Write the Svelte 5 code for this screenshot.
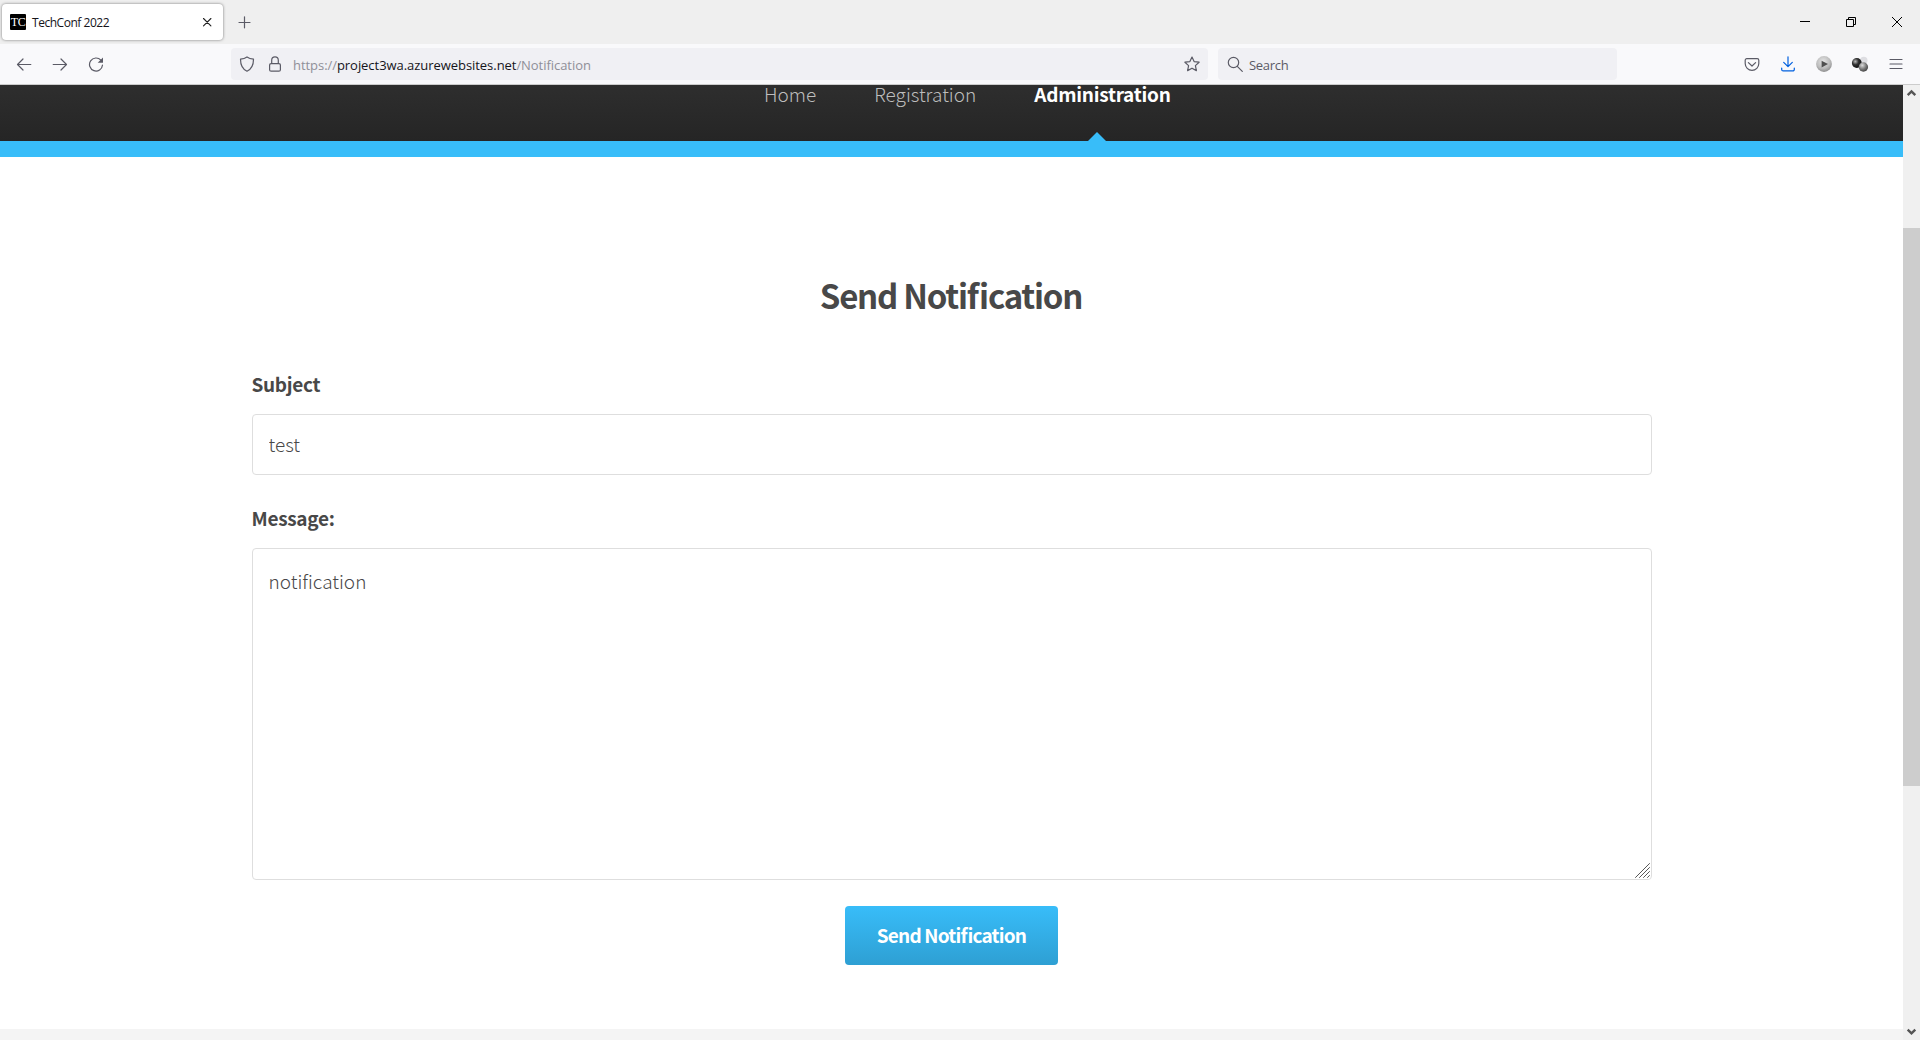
<script>
  let subject = $state('test');
  let message = $state('notification');
</script>

<div class="window">
  <div class="tabstrip">
    <div class="tab">
      <span class="favicon">TC</span>
      <span class="tab-title">TechConf 2022</span>
      <svg class="tab-close" width="16" height="16" viewBox="0 0 16 16"><path d="M4.500 4.500l7.400 7.400M11.900 4.500L4.500 11.900" /></svg>
    </div>
    <svg class="new-tab" width="16" height="16" viewBox="0 0 16 16"><path d="M8.500 2.800v11M3 8.500h11" /></svg>
    <div class="controls">
      <svg width="16" height="16" viewBox="0 0 16 16"><path d="M3 7.500h10" /></svg>
      <svg width="16" height="16" viewBox="0 0 16 16"><path d="M3.500 5.500h7v7h-7zM5.500 5.500v-2h7v7h-2" /></svg>
      <svg width="16" height="16" viewBox="0 0 16 16"><path d="M3 3l10 10M13 3L3 13" /></svg>
    </div>
  </div>

  <div class="toolbar">
    <div class="nav-buttons">
      <svg width="16" height="16" viewBox="0 0 16 16"><path d="M1.500 8.500h13.300M7 3L1.500 8.500 7 14" /></svg>
      <svg width="16" height="16" viewBox="0 0 16 16"><path d="M1.200 8.500h13.300M9 3l5.500 5.500L9 14" /></svg>
      <svg width="16" height="16" viewBox="0 0 16 16"><path d="M12.900 4.200A6.500 6.500 0 1 0 14.500 9" /><path class="solid" d="M15 1.500v5.300H9.700z" /></svg>
    </div>
    <div class="urlbar">
      <svg width="16" height="16" viewBox="0 0 16 16"><path d="M8 .9C6.300 2.100 3.900 2.900 1.500 3.200c0 5.400 1.600 9.700 6.500 12 4.900-2.300 6.500-6.600 6.500-12C12.100 2.900 9.700 2.100 8 .9z" /></svg>
      <svg class="lock" width="16" height="16" viewBox="0 0 16 16"><rect x="2.600" y="7.600" width="10.800" height="7.600" rx="1.500" /><path d="M4.700 7.500V4.200a3.300 3.300 0 0 1 6.600 0v3.300" /></svg>
      <span class="url"><span>https://</span><b>project3wa.azurewebsites.net</b><span>/Notification</span></span>
      <svg class="star" width="16" height="16" viewBox="0 0 16 16"><path d="M8 1.100l2.100 4.500 5 .6-3.700 3.400 1 5L8 12.200l-4.400 2.400 1-5L.9 6.200l5-.6z" /></svg>
    </div>
    <div class="searchbar">
      <svg width="16" height="16" viewBox="0 0 16 16"><circle cx="6.500" cy="6.500" r="5.200" /><path d="M10.300 10.300l5 5" /></svg>
      <span>Search</span>
    </div>
    <div class="actions">
      <svg width="16" height="16" viewBox="0 0 16 16"><path d="M2.800 2.700h10.400a1.600 1.600 0 0 1 1.600 1.600v3.200a6.800 6.800 0 0 1-13.600 0V4.300a1.600 1.600 0 0 1 1.600-1.600zM4.400 6.600L8 10l3.600-3.400" /></svg>
      <svg class="download" width="16" height="16" viewBox="0 0 16 16"><path d="M8 .8v9.500M3.700 6.300L8 10.600l4.300-4.300M1.700 12v1.400a1.500 1.500 0 0 0 1.500 1.500h9.600a1.500 1.500 0 0 0 1.500-1.500V12" /></svg>
      <svg class="addon" width="16" height="16" viewBox="0 0 16 16">
        <defs>
          <radialGradient id="disc" cx="45%" cy="35%" r="65%"><stop offset="0" stop-color="#e6e6e6" /><stop offset=".65" stop-color="#bdbdbd" /><stop offset="1" stop-color="#8f8f8f" /></radialGradient>
        </defs>
        <circle cx="8" cy="8" r="7.900" fill="url(#disc)" /><path d="M5.600 4.700L12 8l-6.400 3.400z" fill="#505050" />
      </svg>
      <svg class="addon" width="18" height="16" viewBox="0 0 18 16">
        <defs>
          <radialGradient id="dark" cx="35%" cy="35%" r="65%"><stop offset="0" stop-color="#bbb" /><stop offset=".5" stop-color="#333" /><stop offset="1" stop-color="#111" /></radialGradient>
          <radialGradient id="mid" cx="38%" cy="32%" r="70%"><stop offset="0" stop-color="#ddd" /><stop offset=".6" stop-color="#777" /><stop offset="1" stop-color="#444" /></radialGradient>
        </defs>
        <circle cx="12.800" cy="4.500" r="3.700" fill="#dedee2" /><circle cx="5.800" cy="7" r="4.900" fill="url(#dark)" /><circle cx="12.400" cy="11" r="4.700" fill="url(#mid)" />
      </svg>
      <svg width="16" height="16" viewBox="0 0 16 16"><path d="M2 3.500h12M2 8h12M2 12.500h12" /></svg>
    </div>
  </div>

  <div class="viewport">
    <div class="page">
      <nav>
        <a href="#home">Home</a>
        <a href="#registration">Registration</a>
        <a class="active" href="#administration">Administration</a>
      </nav>
      <main>
        <h2>Send Notification</h2>
        <label for="subject">Subject</label>
        <input id="subject" type="text" bind:value={subject} />
        <label for="message">Message:</label>
        <div class="area">
          <textarea id="message" bind:value={message}></textarea>
          <svg class="grip" width="15" height="15" viewBox="0 0 15 15"><path d="M.5 14.500l14-14M4.500 14.500l10-10M8.500 14.500l6-6M12.500 14.500l2-2" /></svg>
        </div>
        <button>Send Notification</button>
      </main>
    </div>
    <div class="scrollbar">
      <svg width="17" height="17" viewBox="0 0 17 17"><path d="M4.700 10.200l3.800-3.800 3.800 3.800" /></svg>
      <div class="thumb"></div>
      <svg width="17" height="17" viewBox="0 0 17 17"><path d="M4.700 6.600l3.800 3.800 3.800-3.800" /></svg>
    </div>
  </div>
</div>

<style>
  :global(body) { margin: 0; overflow: hidden; }
  .window {
    width: 1920px; height: 1040px; display: flex; flex-direction: column;
    font: 12px/16px "Open Sans", sans-serif; color: #15141a; background: #fff;
  }
  svg { display: block; flex: none; fill: none; stroke: #5b5b66; stroke-width: 1.2; stroke-linecap: round; stroke-linejoin: round; }
  .solid { fill: #5b5b66; stroke: none; }

  .tabstrip { height: 44px; flex: none; display: flex; align-items: center; background: #efefef; box-sizing: border-box; }
  .tab {
    width: 221px; height: 36px; margin-left: 2px; padding: 0 8px; box-sizing: border-box;
    display: flex; align-items: center; background: #fff; border-radius: 4px; box-shadow: 0 0 3px rgba(0, 0, 0, .5);
  }
  .favicon {
    width: 16px; height: 16px; border-radius: 1px; background: #000; color: #fff; text-align: center;
    font: 12px/16px "Liberation Serif", serif; letter-spacing: -.5px;
  }
  .tab-title { margin-left: 6px; padding-top: 2px; flex: 1; letter-spacing: -.47px; white-space: nowrap; }
  .tab-close { stroke: #222; stroke-width: 1.1; }
  .new-tab { margin-left: 13px; }
  .controls { margin-left: auto; display: flex; gap: 30px; margin-right: 15px; }
  .controls svg { stroke: #000; stroke-width: 1; stroke-linecap: butt; stroke-linejoin: miter; }

  .toolbar { height: 41px; flex: none; display: flex; align-items: center; background: #f9f9fb; border-bottom: 1px solid #ccc; box-sizing: border-box; }
  .nav-buttons { display: flex; gap: 20px; margin-left: 16px; width: 215px; }
  .urlbar, .searchbar { height: 32px; display: flex; align-items: center; background: #f0f0f4; border-radius: 4px; box-sizing: border-box; }
  .urlbar { width: 977px; padding: 0 8px; }
  .lock { margin-left: 12px; }
  .url { margin-left: 10px; padding-top: 2px; flex: 1; display: flex; font-size: 13px; letter-spacing: -.05px; color: #8f8f98; }
  .url b { font-weight: 400; color: #15141a; }
  .searchbar { width: 399px; margin-left: 10px; padding-left: 9px; gap: 6px; font-size: 13px; letter-spacing: -.3px; color: #5b5b66; }
  .searchbar span { padding-top: 2px; }
  .actions { margin-left: auto; margin-right: 17px; display: flex; gap: 20px; }
  .actions .addon + svg, .actions .addon { margin-right: -1px; }
  .download { stroke: #0060df; }
  .addon { stroke: none; }

  .viewport { flex: 1; min-height: 0; display: flex; }
  .page { width: 1903px; background: #f4f4f4; color: #484848; font-family: "Noto Sans CJK JP", "Source Sans Pro", sans-serif; }
  nav {
    height: 72px; box-sizing: border-box; border-bottom: 16px solid #38bdf9; background: linear-gradient(#2e2e2e, #252525);
    display: flex; gap: 58px; padding-left: 764px; font-size: 19px; line-height: 18px;
  }
  nav a { color: #bdbdbd; font-weight: 300; text-decoration: none; height: 56px; position: relative; }
  nav .active { color: #fff; font-weight: 700; letter-spacing: -.25px; }
  .active::after {
    content: ""; position: absolute; left: 54px; bottom: 0;
    border: 9px solid transparent; border-top: 0; border-bottom-color: #38bdf9;
  }
  main {
    height: 872px; box-sizing: border-box; padding: 118px 251px 0 252px; background: #fff;
    display: flex; flex-direction: column;
  }
  h2 {
    margin: 0 2px 55px 0; text-align: center; font-size: 33px; line-height: 40px; font-weight: 700;
    letter-spacing: -1.22px; font-feature-settings: "liga" 1;
  }
  label { font-size: 19px; line-height: 28px; font-weight: 700; margin-bottom: 16px; letter-spacing: -.3px; text-indent: -.5px; }
  input, textarea {
    display: block; width: 100%; box-sizing: border-box; border: 1px solid #dedede; border-radius: 4px; background: #fff;
    font-family: inherit; font-size: 19px; font-weight: 300; color: #484848; outline: 0; margin: 0;
  }
  input { height: 61px; padding: 0 15.5px 2px; margin-bottom: 29px; }
  .area { position: relative; height: 332px; margin-bottom: 26px; }
  textarea { height: 332px; padding: 15px 15.5px; line-height: 34px; resize: none; }
  .grip { position: absolute; right: 2px; bottom: 2px; stroke: #555; stroke-width: 1; }
  button {
    align-self: center; width: 213px; height: 59px; margin: 0 1px 0 0; border: 0; border-radius: 4px; padding: 0 0 1px; color: #fff;
    background: linear-gradient(#38bdf9, #2e9fd3); font: 700 19px/28px "Noto Sans CJK JP", sans-serif;
    letter-spacing: -.8px; font-feature-settings: "liga" 1;
  }
  .scrollbar { width: 17px; background: #f0f0f0; display: flex; flex-direction: column; }
  .scrollbar svg { stroke: #555; stroke-width: 2.400; stroke-linecap: butt; stroke-linejoin: miter; }
  .thumb { height: 558px; margin: 126px 0 auto; background: #cdcdcd; }
</style>
